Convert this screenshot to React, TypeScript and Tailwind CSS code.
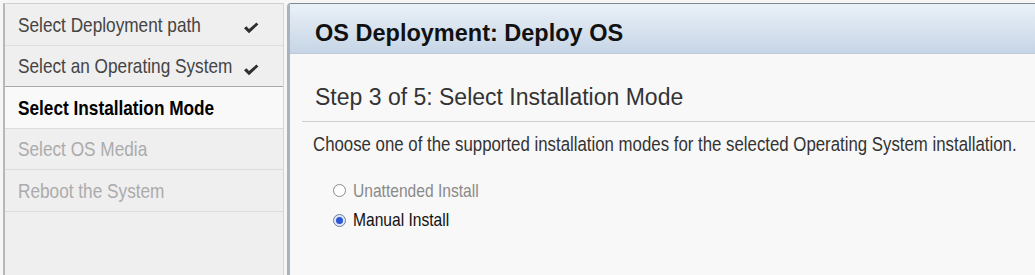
type StepState = 'done' | 'active' | 'todo';

interface Step {
  label: string;
  state: StepState;
}

const STEPS: Step[] = [
  { label: 'Select Deployment path', state: 'done' },
  { label: 'Select an Operating System', state: 'done' },
  { label: 'Select Installation Mode', state: 'active' },
  { label: 'Select OS Media', state: 'todo' },
  { label: 'Reboot the System', state: 'todo' },
];

const sans = "font-['Liberation_Sans',Arial,sans-serif]";
// the screenshot's UI font is a narrow face; Liberation Sans squeezed to Arial Narrow proportions
const squeeze = 'inline-block origin-left scale-x-[0.82] whitespace-nowrap';

function Check() {
  return (
    <svg width="16" height="12" viewBox="0 0 16 12" className="mt-[8px] shrink-0">
      <path d="M1 6.2 L3.4 4.2 L6 7 L13.4 0.6 L15.4 2.4 L6 11.2 Z" fill="#2f2f2f" />
    </svg>
  );
}

function Radio({ checked }: { checked: boolean }) {
  if (checked) {
    return (
      <span className="flex h-[13px] w-[13px] shrink-0 items-center justify-center rounded-full border border-[#6f7f9c] bg-[#dfe6f5]">
        <span className="h-[7px] w-[7px] rounded-full bg-[#2a55d4]" />
      </span>
    );
  }
  return <span className="h-[13px] w-[13px] shrink-0 rounded-full border border-[#8a8a8a] bg-white" />;
}

export default function App() {
  return (
    <div className={`flex h-[275px] w-[1035px] overflow-hidden bg-[#f6f6f6] pl-[3px] pt-[3px] ${sans}`}>
      <aside className="w-[281px] shrink-0 border-l-2 border-r border-t border-l-[#b8b8b8] border-r-[#d6d6d6] border-t-[#d0d0d0] bg-[#efefef]">
        {STEPS.map((step, i) => {
          const beforeActive = STEPS[i + 1]?.state === 'active';
          return (
            <div
              key={step.label}
              className={`flex h-[41.5px] items-center border-b pl-[13px] pr-[24px] text-[21px] ${
                beforeActive ? 'border-b-[#a9a9a9]' : 'border-b-[#dcdcdc]'
              } ${
                step.state === 'active'
                  ? 'bg-[#f9f9f9] font-bold text-black'
                  : step.state === 'done'
                    ? 'text-[#444]'
                    : 'text-[#ababab]'
              }`}
            >
              <span className="min-w-0 flex-1">
                <span className={squeeze}>{step.label}</span>
              </span>
              {step.state === 'done' && <Check />}
            </div>
          );
        })}
      </aside>

      <main className="ml-[3px] min-w-0 flex-1 rounded-tl-[4px] border-l-[3px] border-t border-l-[#a9b2bd] border-t-[#7f8994] bg-[#f8f8f8]">
        <div className="flex h-[50px] items-center border-b border-b-[#c0cbd8] bg-gradient-to-b from-[#eaf1f8] to-[#c6d5e6] pl-[25px] pt-[10px]">
          <h1 className="text-[23.5px] font-bold text-[#111]">OS Deployment: Deploy OS</h1>
        </div>

        <div className="ml-[12px] flex h-[68px] items-center border-b border-b-[#cfcfcf] pl-[13px] pt-[19px]">
          <h2 className="text-[23px] text-[#333]">Step 3 of 5: Select Installation Mode</h2>
        </div>

        <p className="mt-[10px] pl-[23px] text-[20.5px] leading-[24px] text-[#333]">
          <span className={squeeze}>
            Choose one of the supported installation modes for the selected Operating System installation.
          </span>
        </p>

        <div className="mt-[20px] flex flex-col pl-[43px] text-[19px]">
          <label className="flex h-[29.5px] items-center gap-[7px] text-[#8a8a8a]">
            <Radio checked={false} />
            <span className={squeeze}>Unattended Install</span>
          </label>
          <label className="flex h-[29.5px] items-center gap-[7px] text-[#111]">
            <Radio checked />
            <span className={squeeze}>Manual Install</span>
          </label>
        </div>
      </main>
    </div>
  );
}
